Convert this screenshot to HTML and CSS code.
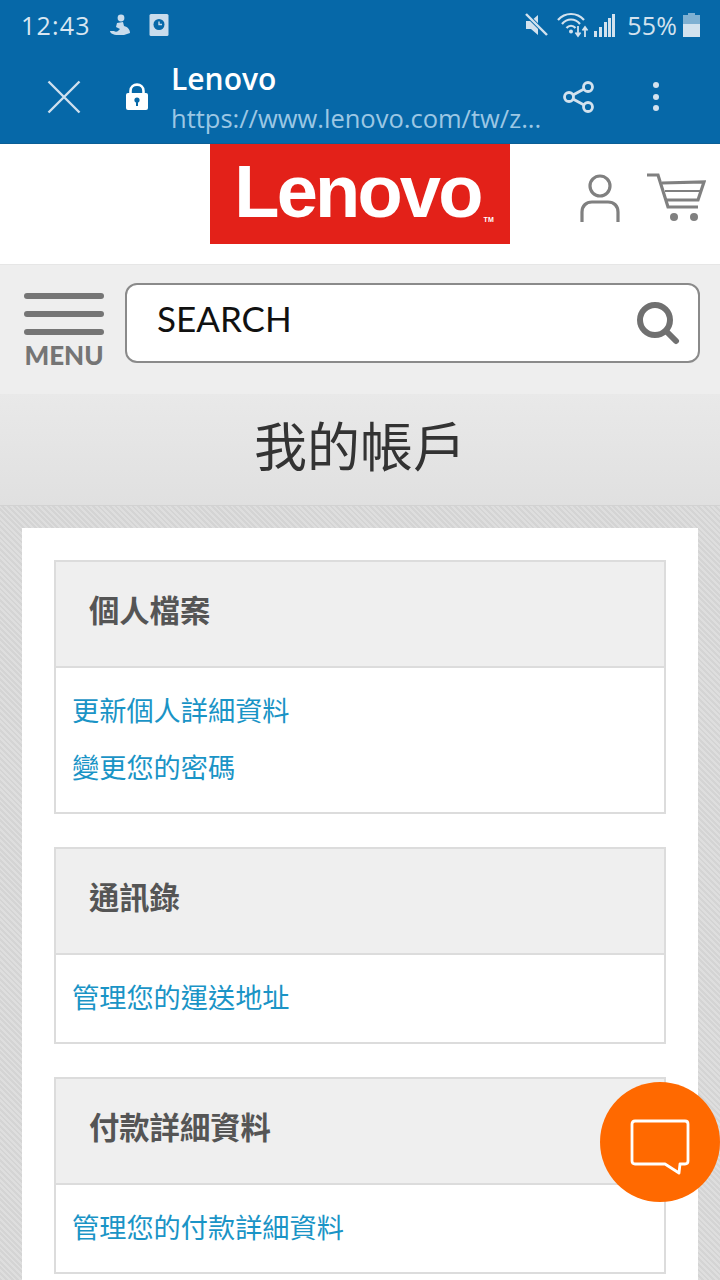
FILE: index.html
```html
<!DOCTYPE html>
<html lang="zh-TW">
<head>
    <title>我的帳戶</title>
    <meta name="viewport" content="width=device-width, initial-scale=1.0">
    <link rel="stylesheet" href="styles.css">
</head>

<body>
    <!-- Phone status bar + custom tab toolbar -->
    <div class="chrome">
        <div class="status_bar">
            <span class="status_time">12:43</span>
            <svg class="status_icon" width="22" height="24" viewBox="0 0 22 24">
                <circle cx="12" cy="5" r="3.4" fill="#c9dcec"/>
                <path d="M8 10 L14 9 L15 13 C19 14 21 17 21 20 L15 22 L9 22 C4 22 1 20 1 18 L5 18 C6 19 8 19 9 18 L11 16 L7 14 Z" fill="#c9dcec"/>
            </svg>
            <svg class="status_icon" width="20" height="24" viewBox="0 0 20 24">
                <rect x="0.5" y="1" width="19" height="22" rx="1.5" fill="#c9dcec"/>
                <circle cx="10" cy="11.5" r="5.5" fill="#0668a8"/>
                <path d="M10 8.5 V11.5 H13" fill="none" stroke="#c9dcec" stroke-width="1.4"/>
            </svg>
            <span class="status_spacer"></span>
            <svg class="status_mute" width="24" height="24" viewBox="0 0 24 24">
                <path d="M2 8 H7 L14 2 V22 L7 16 H2 Z" fill="#d3e2ee"/>
                <path d="M2 1 L23 22" stroke="#0668a8" stroke-width="4"/>
                <path d="M2 1 L23 22" stroke="#d3e2ee" stroke-width="2.4"/>
            </svg>
            <svg class="status_wifi" width="32" height="26" viewBox="0 0 32 26">
                <g fill="none" stroke="#d3e2ee" stroke-width="2.2">
                    <path d="M1 8 C8 0 20 0 27 8"/>
                    <path d="M5 12 C10 6 18 6 23 12"/>
                    <path d="M9.5 16 C12 13 16 13 18.5 16"/>
                </g>
                <circle cx="14" cy="19.5" r="2" fill="#d3e2ee"/>
                <path d="M21 14 V23 M18.500 20.500 L21 24 L23.500 20.500 M28 25 V15 M25.500 18.500 L28 15 L30.500 18.500" fill="none" stroke="#d3e2ee" stroke-width="1.8"/>
            </svg>
            <svg class="status_signal" width="22" height="24" viewBox="0 0 22 24">
                <g fill="#d3e2ee">
                    <rect x="0" y="18" width="3" height="6"/>
                    <rect x="5" y="14" width="3" height="10"/>
                    <rect x="10" y="9" width="3" height="15"/>
                    <rect x="14" y="5" width="3" height="19"/>
                    <rect x="18" y="1" width="3" height="23"/>
                </g>
            </svg>
            <span class="status_pct">55%</span>
            <svg class="status_battery" width="17" height="24" viewBox="0 0 17 24">
                <path d="M5 0 H12 V2 H17 V24 H0 V2 H5 Z" fill="#7fb0d2"/>
                <rect x="0" y="11" width="17" height="13" fill="#d3e2ee"/>
            </svg>
        </div>

        <div class="toolbar">
            <svg class="tool_close" width="34" height="34" viewBox="0 0 34 34">
                <path d="M1.500 1.500 L32.500 32.500 M32.500 1.500 L1.500 32.500" stroke="#cfe0ee" stroke-width="2.400"/>
            </svg>
            <svg class="tool_lock" width="24" height="28" viewBox="0 0 24 28">
                <path d="M5.500 11 V8 C5.500 -0.500 18.500 -0.500 18.500 8 V11" fill="none" stroke="#fff" stroke-width="2.600"/>
                <rect x="1" y="10" width="22" height="17" rx="2" fill="#fff"/>
                <circle cx="12" cy="17" r="2.600" fill="#0668a8"/>
                <rect x="11" y="18" width="2" height="5" fill="#0668a8"/>
            </svg>
            <div class="tool_title">
                <div class="tool_name">Lenovo</div>
                <div class="tool_url">https://www.lenovo.com/tw/z...</div>
            </div>
            <svg class="tool_share" width="32" height="34" viewBox="0 0 32 34">
                <g fill="none" stroke="#d3e2ee" stroke-width="2.800">
                    <circle cx="25" cy="7" r="4.500"/>
                    <circle cx="6" cy="17" r="4.500"/>
                    <circle cx="25" cy="27" r="4.500"/>
                    <path d="M10 15 L21 9 M10 19 L21 25"/>
                </g>
            </svg>
            <div class="tool_more"><i></i><i></i><i></i></div>
        </div>
    </div>

    <!-- Site header -->
    <div class="site_header">
        <div class="logo"><span class="logo_text">Lenovo</span><span class="logo_tm">TM</span></div>
        <svg class="icon_user" width="40" height="50" viewBox="0 0 40 50">
            <g fill="none" stroke="#808080" stroke-width="3.200">
                <circle cx="20" cy="12" r="10"/>
                <path d="M2 48 V38 C2 32 6 28 12 28 H28 C34 28 38 32 38 38 V48"/>
            </g>
        </svg>
        <svg class="icon_cart" width="60" height="50" viewBox="0 0 60 50">
            <g fill="none" stroke="#808080" stroke-width="3.200">
                <path d="M1 2 H12 L22 34 H52"/>
                <path d="M16 10 L58 9 L52 27 L21 27"/>
                <path d="M19 18 H55" stroke-width="1.800"/>
            </g>
            <circle cx="28" cy="44" r="4" fill="#808080"/>
            <circle cx="48" cy="44" r="4" fill="#808080"/>
        </svg>
    </div>

    <!-- Menu + search -->
    <div class="search_row">
        <div class="menu_btn">
            <div class="menu_lines"><i></i><i></i><i></i></div>
            <div class="menu_label">MENU</div>
        </div>
        <div class="search_box">
            <span class="search_text">SEARCH</span>
            <svg width="44" height="44" viewBox="0 0 44 44">
                <circle cx="19" cy="19" r="15" fill="none" stroke="#707070" stroke-width="6"/>
                <path d="M30 30 L40 40" stroke="#707070" stroke-width="6" stroke-linecap="round"/>
            </svg>
        </div>
    </div>

    <h1 class="page_title">我的帳戶</h1>

    <div class="page_body">
        <div class="account_card">
            <div class="panel">
                <div class="panel_head">個人檔案</div>
                <div class="panel_links">
                    <a href="#">更新個人詳細資料</a>
                    <a href="#">變更您的密碼</a>
                </div>
            </div>
            <div class="panel">
                <div class="panel_head">通訊錄</div>
                <div class="panel_links">
                    <a href="#">管理您的運送地址</a>
                </div>
            </div>
            <div class="panel">
                <div class="panel_head">付款詳細資料</div>
                <div class="panel_links">
                    <a href="#">管理您的付款詳細資料</a>
                </div>
            </div>
        </div>
    </div>

    <!-- Floating chat button -->
    <div class="chat_fab">
        <svg width="60" height="58" viewBox="0 0 60 58">
            <path d="M5 2 H55 C57 2 58 3 58 5 V42 C58 44 57 45 55 45 H50 L49 54 L35 45 H5 C3 45 2 44 2 42 V5 C2 3 3 2 5 2 Z" fill="none" stroke="#fff" stroke-width="2.800" stroke-linejoin="round"/>
        </svg>
    </div>
</body>
</html>
```

FILE: styles.css
```css
/* Base */
html, body {
    margin: 0;
    padding: 0;
    height: 1280px;
    overflow: hidden;
    background: #fff;
    font-family: Lato, "Noto Sans CJK TC", sans-serif;
}

/* Status bar and toolbar */
.chrome {
    height: 143px;
    background: #0668a8;
    border-bottom: 1px solid #0a5f96;
}

.status_bar {
    display: flex;
    align-items: center;
    height: 50px;
    padding: 0 20px 0 21px;
    color: #d3e2ee;
}

.status_time {
    font-family: "Open Sans", sans-serif;
    font-size: 25px;
    letter-spacing: 1.200px;
    width: 70px;
    color: #d9e6f1;
}

.status_icon {
    margin-left: 18px;
}

.status_spacer {
    flex: 1;
}

.status_wifi {
    margin-left: 9px;
}

.status_signal {
    margin-left: 5px;
}

.status_pct {
    font-family: "Open Sans", sans-serif;
    font-size: 25px;
    margin-left: 11px;
    letter-spacing: 0.200px;
}

.status_battery {
    margin-left: 6px;
}

.toolbar {
    display: flex;
    align-items: center;
    height: 93px;
    padding: 0 0 0 47px;
}

.tool_lock {
    margin-left: 44px;
}

.tool_title {
    width: 372px;
    margin-left: 22px;
    margin-top: 4px;
}

.tool_name {
    font-family: "Open Sans", sans-serif;
    font-weight: 600;
    font-size: 30px;
    line-height: 40px;
    color: #fff;
}

.tool_url {
    font-family: "Open Sans", sans-serif;
    font-size: 25.500px;
    line-height: 39px;
    color: #9cc7e4;
    white-space: nowrap;
}

.tool_share {
    margin-left: 20px;
}

.tool_more {
    display: flex;
    flex-direction: column;
    gap: 5.500px;
    margin-left: 58px;
}

.tool_more i {
    display: block;
    width: 6px;
    height: 6px;
    border-radius: 50%;
    background: #d3e2ee;
}

/* Site header */
.site_header {
    display: flex;
    align-items: flex-start;
    height: 120px;
    padding-left: 210px;
    background: #fff;
}

.logo {
    display: flex;
    align-items: flex-end;
    justify-content: center;
    width: 300px;
    height: 100px;
    box-sizing: border-box;
    padding: 0 0 7px 8px;
    background: #e32119;
    color: #fff;
}

.logo_text {
    font-family: "Liberation Sans", sans-serif;
    font-weight: 700;
    font-size: 74px;
    line-height: 90px;
    letter-spacing: -2.800px;
}

.logo_tm {
    font-family: "Liberation Sans", sans-serif;
    font-size: 7px;
    line-height: 34px;
    font-weight: 700;
    margin-left: 3px;
}

.icon_user {
    margin: 30px 0 0 70px;
}

.icon_cart {
    margin: 29px 0 0 26px;
}

/* Menu and search */
.search_row {
    display: flex;
    height: 130px;
    background: #eee;
    border-top: 1px solid #e6e6e6;
    box-sizing: border-box;
    padding: 18px 20px 0 24px;
}

.menu_btn {
    width: 80px;
    margin-right: 21px;
    padding-top: 10px;
}

.menu_lines {
    display: flex;
    flex-direction: column;
    gap: 12px;
}

.menu_lines i {
    display: block;
    height: 6px;
    border-radius: 3px;
    background: #757575;
}

.menu_label {
    font-weight: 900;
    font-size: 26px;
    line-height: 34px;
    margin-top: 3px;
    color: #757575;
    text-align: center;
}

.search_box {
    display: flex;
    align-items: center;
    justify-content: space-between;
    flex: 1;
    height: 80px;
    box-sizing: border-box;
    padding: 0 18px 0 30px;
    background: #fff;
    border: 2px solid #8a8a8a;
    border-radius: 12px;
}

.search_text {
    font-size: 35px;
    color: #111;
    margin-bottom: 10px;
}

/* Page title */
.page_title {
    height: 112px;
    margin: 0;
    box-sizing: border-box;
    border-bottom: 1px solid #d2d2d2;
    background: linear-gradient(to bottom, #e9e9e9, #e0e0e0);
    font-family: "Noto Sans CJK TC", sans-serif;
    font-weight: 400;
    font-size: 53px;
    line-height: 100px;
    text-align: center;
    color: #333;
}

/* Account panels */
.page_body {
    padding: 22px 22px 0;
    height: 774px;
    box-sizing: border-box;
    background-color: #d9d9d9;
    background-image: repeating-linear-gradient(45deg, #d4d4d4 0, #d4d4d4 2px, #dedede 2px, #dedede 4px);
}

.account_card {
    display: flex;
    flex-direction: column;
    gap: 33px;
    height: 752px;
    box-sizing: border-box;
    padding: 32px 32px 0;
    background: #fff;
}

.panel {
    border: 2px solid #dcdcdc;
}

.panel_head {
    height: 106px;
    box-sizing: border-box;
    padding-left: 33px;
    background: #efefef;
    border-bottom: 2px solid #dcdcdc;
    font-family: "Noto Sans CJK TC", sans-serif;
    font-weight: 700;
    font-size: 30.300px;
    line-height: 94px;
    color: #555;
}

.panel_links {
    display: flex;
    flex-direction: column;
    gap: 17px;
    padding: 21px 16px 26px;
}

.panel_links a {
    font-family: "Noto Sans CJK TC", sans-serif;
    font-size: 27.200px;
    line-height: 40px;
    color: #1a94c6;
    text-decoration: none;
}

/* Chat button */
.chat_fab {
    position: absolute;
    left: 600px;
    top: 1082px;
    width: 120px;
    height: 120px;
    border-radius: 50%;
    background: #ff6900;
    display: flex;
    align-items: center;
    justify-content: center;
}

.chat_fab svg {
    margin-top: 12px;
}
```
